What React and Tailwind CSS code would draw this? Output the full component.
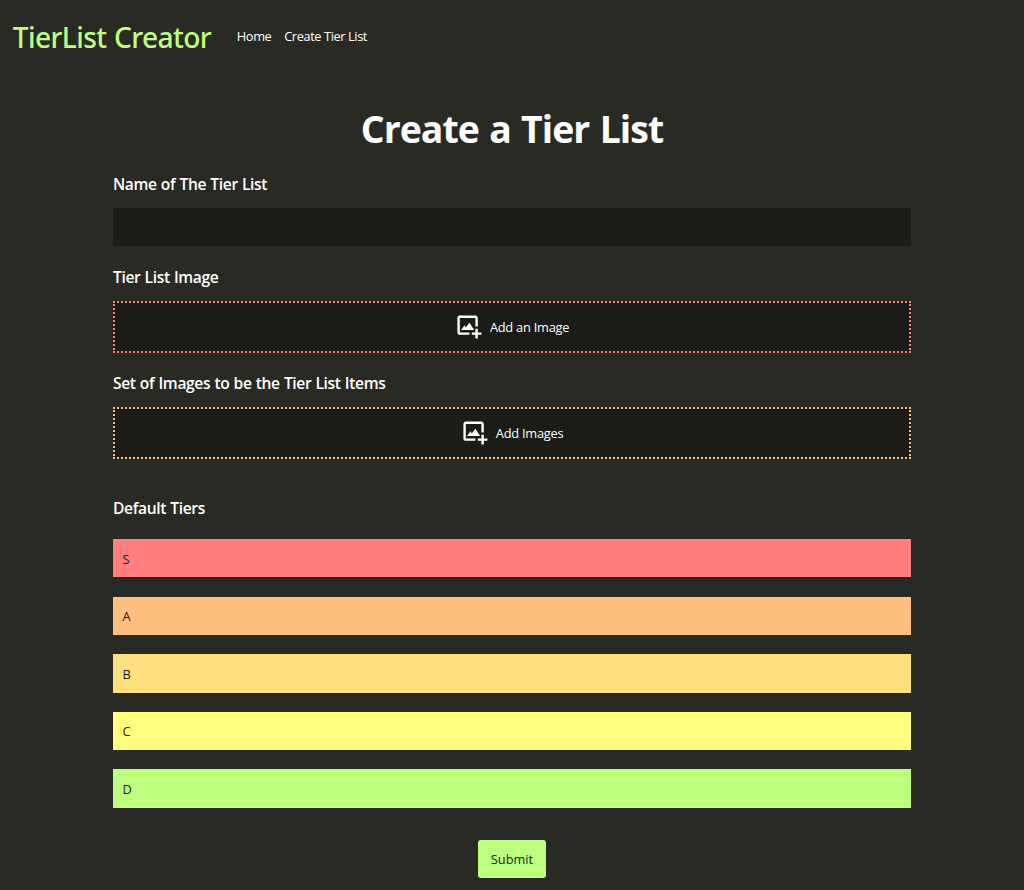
import { BiImageAdd } from 'react-icons/bi';

const tiers = [
  { name: 'S', color: 'bg-[#ff7f7f]' },
  { name: 'A', color: 'bg-[#ffbf7f]' },
  { name: 'B', color: 'bg-[#ffdf7f]' },
  { name: 'C', color: 'bg-[#ffff7f]' },
  { name: 'D', color: 'bg-[#bfff7f]' },
];

function Label({ children }) {
  return <h2 className="text-[15.6px] leading-6 font-semibold tracking-[-0.36px] [word-spacing:0.5px]">{children}</h2>;
}

function Upload({ text, border }) {
  return (
    <button
      type="button"
      className={`flex h-13 w-full items-center justify-center gap-[6.4px] border-2 border-dotted bg-[#1b1b17] ${border}`}
    >
      <BiImageAdd className="mb-px size-[28.8px]" />
      <span className="tracking-[-0.22px]">{text}</span>
    </button>
  );
}

export default function App() {
  return (
    <div className="min-h-screen bg-[#2a2a25] font-['Open_Sans','Noto_Sans',sans-serif] text-[12.8px] leading-5 text-white">
      <nav className="flex h-[72px] items-center pl-[12.8px]">
        <a className="w-56 pt-px font-['Noto_Sans',sans-serif] text-[28.2px] leading-10 font-medium tracking-[-0.64px] whitespace-nowrap text-[#bfff7f] [word-spacing:1px]">
          TierList Creator
        </a>
        <div className="flex gap-[12.8px]">
          <a className="tracking-[-0.4px]">Home</a>
          <a className="tracking-[-0.4px]">Create Tier List</a>
        </div>
      </nav>
      <main className="mx-auto flex w-[798px] flex-col">
        <h1 className="mt-7 text-center text-[37.4px] leading-[58px] font-bold tracking-[-0.95px] [word-spacing:1.5px]">
          Create a Tier List
        </h1>
        <section className="mt-[14px]">
          <Label>Name of The Tier List</Label>
          <input type="text" className="mt-3 block h-[38px] w-full bg-[#1b1b17] px-[9.6px] outline-none" />
        </section>
        <section className="mt-[19px] flex flex-col gap-3">
          <Label>Tier List Image</Label>
          <Upload text="Add an Image" border="border-[#ff7f7f]" />
        </section>
        <section className="mt-[18px] flex flex-col gap-3">
          <Label>Set of Images to be the Tier List Items</Label>
          <Upload text="Add Images" border="border-[#ffbf7f]" />
        </section>
        <section className="mt-[37px]">
          <Label>Default Tiers</Label>
          <div className="mt-[19px] flex flex-col gap-[19.2px] text-[#1b1b17]">
            {tiers.map((tier) => (
              <div key={tier.name} className={`flex h-[38.4px] items-center px-[9.6px] pt-[0.7px] ${tier.color}`}>
                {tier.name}
              </div>
            ))}
          </div>
        </section>
        <button type="submit" className="mt-8 h-[38px] w-[68px] self-center rounded-[3px] bg-[#bfff7f] text-[#1b1b17]">
          Submit
        </button>
      </main>
    </div>
  );
}
